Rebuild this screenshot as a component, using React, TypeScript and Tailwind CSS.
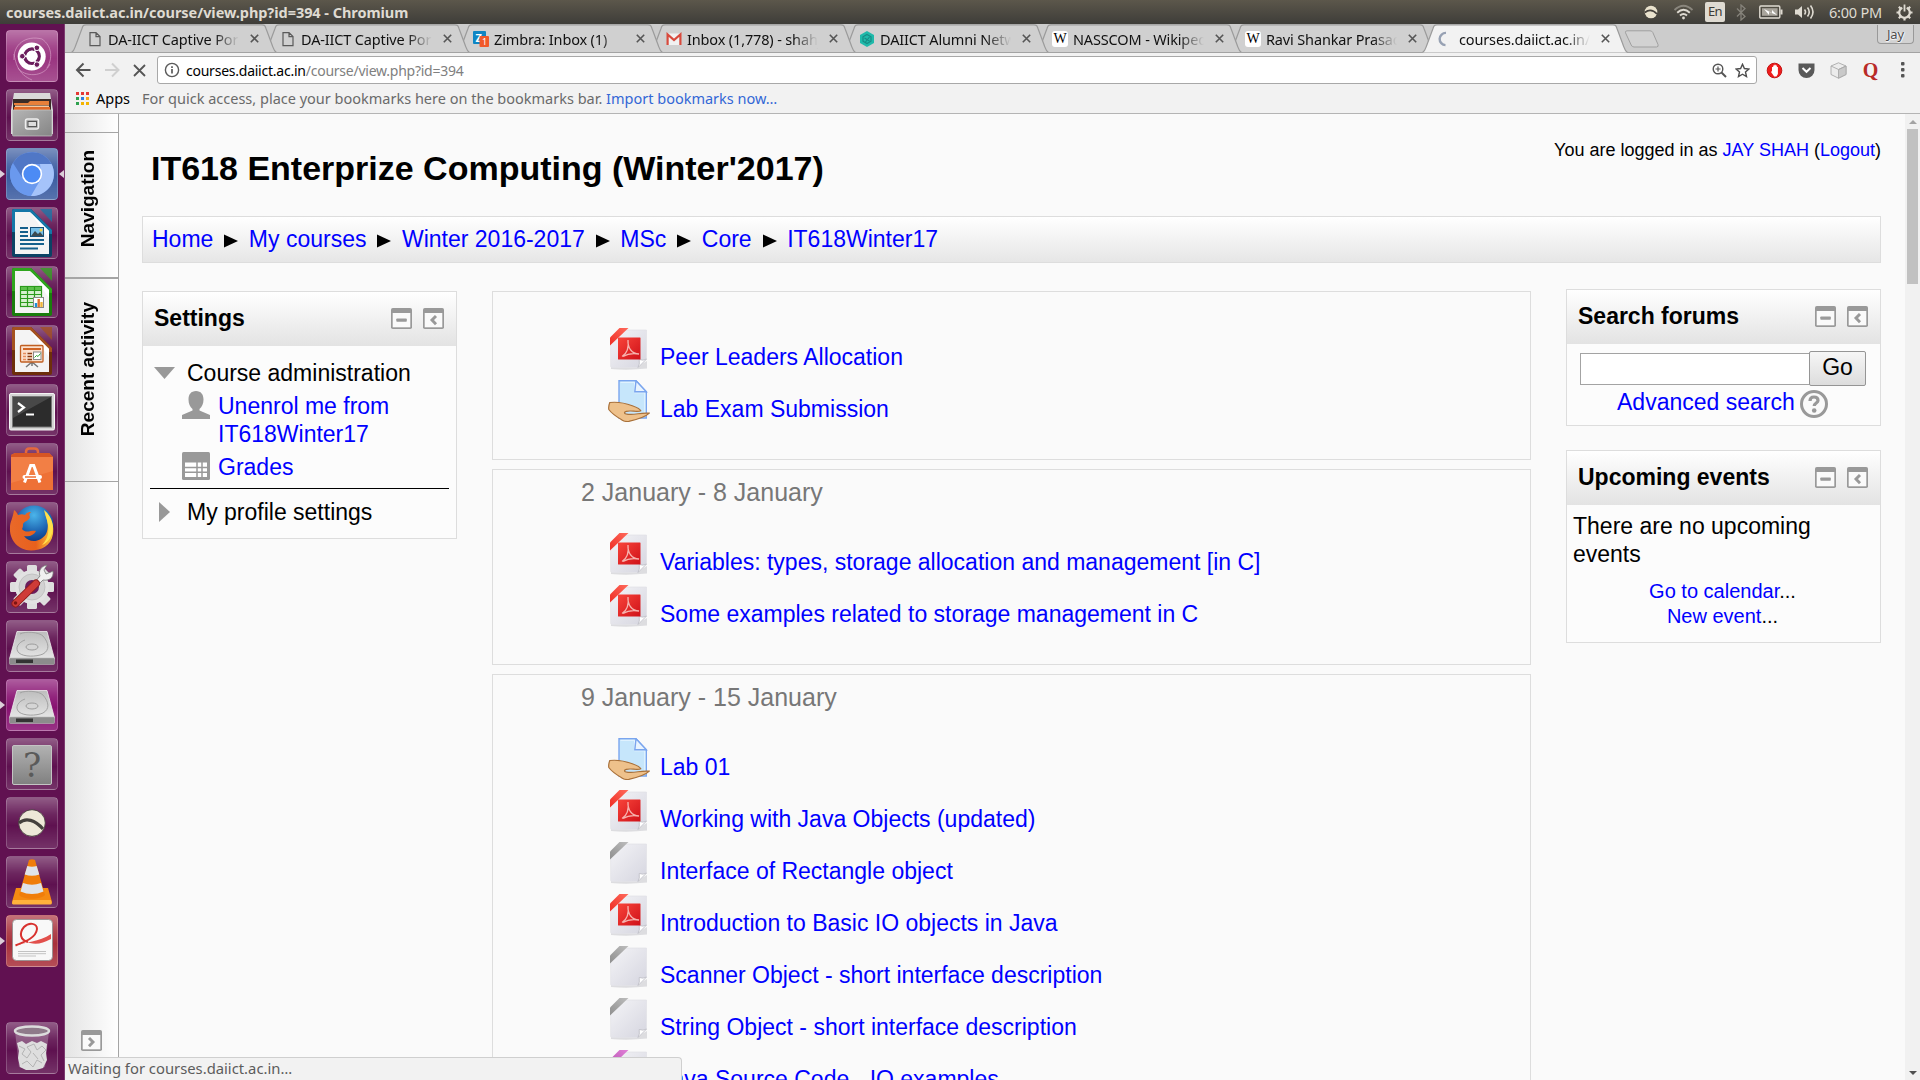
import React from "react";

type Kind = "pdf" | "hand" | "text" | "java";

const UI = "font-['Noto_Sans',sans-serif]";

/* ---------- Launcher icons ---------- */

const DashIcon = () => (
  <svg viewBox="0 0 52 52" className="size-full">
    <g fill="none" stroke="#e3b5d6" strokeOpacity=".55" strokeWidth="1">
      <path d="M8 30C7 14 20 5 36 9" />
      <path d="M12 38C18 47 38 48 44 34" />
      <path d="M36 9C46 16 47 28 41 38" />
      <path d="M8 24C10 34 12 44 26 50" />
    </g>
    <circle cx="25.7" cy="26.6" r="14" fill="#fff" />
    <circle cx="26" cy="26.2" r="7.3" fill="none" stroke="#6b1d5c" strokeWidth="3.2" />
    <g stroke="#fff" strokeWidth="1.4">
      <path d="M26 26.2L15 26.2M26 26.2L31.5 16.7M26 26.2L31.5 35.7" />
    </g>
    <circle cx="26" cy="26.2" r="5.4" fill="#fff" />
    <g fill="#6b1d5c" stroke="#fff" strokeWidth="1">
      <circle cx="16.3" cy="26.2" r="2.8" />
      <circle cx="30.9" cy="17.8" r="2.8" />
      <circle cx="30.9" cy="34.6" r="2.8" />
    </g>
  </svg>
);

const FilesIcon = () => (
  <svg viewBox="0 0 52 52" className="size-full">
    <defs>
      <linearGradient id="fc" x1="0" y1="0" x2="1" y2="1">
        <stop offset="0" stopColor="#b5b5b5" />
        <stop offset="1" stopColor="#858585" />
      </linearGradient>
    </defs>
    <path d="M8 4h36l3 17v24H5V21z" fill="#d9d9d9" />
    <rect x="7" y="10" width="38" height="13" fill="#3a2c28" />
    <path d="M8 14h14l2-2h19v4H8z" fill="#e8803a" />
    <path d="M9 16.5h34v3H9z" fill="#f6c9a0" />
    <path d="M8 18h36v5H8z" fill="#e06a28" />
    <rect x="6.5" y="21" width="39.5" height="26" rx="1" fill="url(#fc)" stroke="#c9c9c9" strokeWidth=".7" />
    <rect x="19.5" y="30" width="13" height="10" rx="2" fill="#aaa" stroke="#eee" strokeWidth="1.5" />
    <rect x="22" y="32.5" width="8.5" height="5" fill="#ddd" stroke="#555" />
  </svg>
);

const ChromiumIcon = () => (
  <svg viewBox="0 0 52 52" className="size-full">
    <circle cx="26" cy="26" r="22" fill="#6f9bee" />
    <path d="M7 15A22 22 0 0 0 25 48L34 31 26 26z" fill="#6a99ee" />
    <path d="M45.5 16A22 22 0 0 1 25 48L35.5 30 34 16z" fill="#a5c3fa" />
    <path d="M7 15A22 22 0 0 1 45.5 16H26A10 10 0 0 0 16.5 30z" fill="#5077c6" />
    <circle cx="26" cy="26" r="10.2" fill="#fff" />
    <circle cx="26" cy="26" r="8.6" fill="#4c8bf5" />
  </svg>
);

const OfficeBase = ({ color, dark, children }: { color: string; dark: string; children: React.ReactNode }) => (
  <svg viewBox="0 0 52 52" className="size-full">
    <path d="M8 2h17l21 21v25a2 2 0 0 1-2 2H8a2 2 0 0 1-2-2V4a2 2 0 0 1 2-2z" fill={dark} />
    <path d="M6 25V4a2 2 0 0 1 2-2h17l21 21v4z" fill={color} />
    <path d="M34 2h12v13z" fill={color} opacity=".75" />
    <path d="M9 5h15l19 19v23H9z" fill="#f4f4f4" />
    <path d="M24 5l19 19v8z" fill="#fff" />
    {children}
  </svg>
);

const WriterIcon = () => (
  <OfficeBase color="#1577a8" dark="#0b4264">
    <path d="M14 21h8M14 25h8M14 29h8M14 33h24M14 37h24M14 41.5h18" stroke="#15608c" strokeWidth="1.8" />
    <rect x="24.5" y="20.5" width="13" height="9" fill="#78c0e8" stroke="#15517a" />
    <path d="M25 29l4-5 3 3 2-2 3.5 4z" fill="#3c4a50" />
    <circle cx="35" cy="23" r="1.5" fill="#f5cf43" />
  </OfficeBase>
);

const CalcIcon = () => (
  <OfficeBase color="#2fa51d" dark="#1a7d0d">
    <rect x="14.5" y="20.5" width="21" height="20" fill="#d7f0cf" stroke="#2c9b1c" strokeWidth="1.2" />
    <path d="M15 22.5h20" stroke="#5ec14c" strokeWidth="3" />
    <path d="M14.5 24.5h21M14.5 28.5h21M14.5 32.5h21M14.5 36.5h21M21.5 20v20M28.5 20v20" stroke="#2c9b1c" strokeWidth="1.2" />
    <rect x="27.5" y="31.5" width="10" height="10" fill="#fff" stroke="#888" />
    <path d="M30 41v-4" stroke="#1e90d6" strokeWidth="2.4" />
    <path d="M32.7 41v-8" stroke="#e2702a" strokeWidth="2.4" />
    <path d="M35.5 41v-5" stroke="#f0b53a" strokeWidth="2.4" />
  </OfficeBase>
);

const ImpressIcon = () => (
  <OfficeBase color="#a4511f" dark="#6d2f0b">
    <path d="M20 42l6-5 6 5M26 37v4" stroke="#777" strokeWidth="1.5" fill="none" />
    <rect x="14.5" y="20.5" width="22.5" height="16.5" rx="1" fill="#fbe0cd" stroke="#c05f22" strokeWidth="1.3" />
    <path d="M17 24h18" stroke="#d06424" strokeWidth="2" />
    <path d="M17 28.5h3M17 31.5h3M17 34.5h3" stroke="#e58d5d" strokeWidth="1.6" />
    <path d="M21.5 28.5h4.5M21.5 31.5h4.5M21.5 34.5h4.5" stroke="#8a3c12" strokeWidth="1.6" />
    <rect x="27.5" y="27" width="7.5" height="7.5" fill="#fff" stroke="#888" />
    <path d="M28.5 32.5l2-2 1.5 1 2.5-3" stroke="#2da52d" fill="none" />
  </OfficeBase>
);

const TerminalIcon = () => (
  <svg viewBox="0 0 52 52" className="size-full">
    <rect x="3.5" y="9.5" width="45" height="36.5" rx="1.5" fill="#d4d4d4" stroke="#f4f4f4" />
    <rect x="6.5" y="12.5" width="39" height="30.500" fill="#2c2c2c" stroke="#777" />
    <path d="M7 13h38L7 34z" fill="#505050" opacity=".8" />
    <path d="M12 19l6 4.500-6 4.500" stroke="#fff" strokeWidth="2.2" fill="none" />
    <path d="M20 30.5h8" stroke="#fff" strokeWidth="2" />
  </svg>
);

const SoftwareIcon = () => (
  <svg viewBox="0 0 52 52" className="size-full">
    <path d="M20 17V9q0-3.500 3.500-3.500h5Q32 5.500 32 9v8" fill="none" stroke="#e5683c" strokeWidth="2.5" />
    <path d="M5 12l4-2h34l4 4v33H5z" fill="#ee7136" />
    <path d="M5 12l4-2h34l4 4H5z" fill="#d65523" />
    <path d="M5 14h42v14L5 40z" fill="#f58a52" opacity=".55" />
    <path d="M18.5 39.5l6.200-17h3l6.200 17" stroke="#fff" strokeWidth="3" fill="none" />
    <rect x="16.5" y="32" width="19.5" height="4" rx="2" fill="#fff" />
    <path d="M19 34h11" stroke="#ee7136" strokeWidth="1.3" />
  </svg>
);

const FirefoxIcon = () => (
  <svg viewBox="0 0 52 52" className="size-full">
    <defs>
      <radialGradient id="fxb" cx=".5" cy=".25" r=".75">
        <stop offset="0" stopColor="#4bb5ea" />
        <stop offset=".6" stopColor="#1a5fae" />
        <stop offset="1" stopColor="#0b2f75" />
      </radialGradient>
      <linearGradient id="fxo" x1="0" y1="0" x2="1" y2="0">
        <stop offset="0" stopColor="#e9692a" />
        <stop offset=".6" stopColor="#e8601c" />
        <stop offset="1" stopColor="#fbc83a" />
      </linearGradient>
    </defs>
    <circle cx="28" cy="23" r="19.5" fill="url(#fxb)" />
    <path d="M8 8c2 1 3 3 4 5 3-1 5-1 7 0 2-3 4-3 6-3-2 2-2 3-1 5-1 4-6 4-7 7 0 2 0 3-1 5 4 5 9 1 14 2-2 4-6 6-12 5 5 7 16 7 22-2 3-6 2-14-1-20 8 5 9 14 8 20-2 12-12 16.500-22 16.500C12 48 3 38 4 25c0-5 3-9 4-17z" fill="url(#fxo)" />
    <path d="M38 8c9 7 11 18 7 26-2 5-6 8-9 9 6-6 7-13 6-20-1-6-3-10-4-15z" fill="#ffe04a" />
  </svg>
);

const SettingsIcon = () => (
  <svg viewBox="0 0 52 52" className="size-full">
    <g transform="translate(26 26)">
      {[0, 45, 90, 135].map((a) => (
        <rect key={a} x="-5" y="-22" width="10" height="44" rx="1.5" fill="#dedede" transform={`rotate(${a})`} />
      ))}
      <circle r="17" fill="#e2e2e2" />
      <circle r="13" fill="#d2d2d2" stroke="#bdbdbd" strokeWidth=".8" />
      <circle r="7" fill="#6b1d5c" />
    </g>
    <path d="M28 22l6-7c-2-5 1-10 7-11l-3 5 2 4 5-2 2-1c1 7-4 10-10 9l-7 7z" fill="#f0f0f0" stroke="#777" strokeWidth=".8" />
    <path d="M9.5 42.5L30 22.5" stroke="#8e1d1b" strokeWidth="8" strokeLinecap="round" />
    <path d="M9.5 42.5L30 22.5" stroke="#cf3b37" strokeWidth="6" strokeLinecap="round" />
    <circle cx="9.5" cy="42" r="1.8" fill="#7d1412" />
  </svg>
);

const DriveIcon = () => (
  <svg viewBox="0 0 52 52" className="size-full">
    <defs>
      <linearGradient id="dr" x1="0" y1="0" x2="0" y2="1">
        <stop offset="0" stopColor="#bdbdbd" />
        <stop offset="1" stopColor="#e6e6e6" />
      </linearGradient>
    </defs>
    <path d="M11 11.5h30L48.500 39H3.500z" fill="url(#dr)" stroke="#efefef" strokeWidth=".8" />
    <path d="M3.500 38h45v5.500a1 1 0 0 1-1 1h-43a1 1 0 0 1-1-1z" fill="#8c8c8c" stroke="#bbb" strokeWidth=".6" />
    <rect x="10" y="39.5" width="17" height="3.500" fill="#333" />
    <path d="M14 14c5-3 19-2 23 2 6 7 7 14 0 18-7 3-19 3-24-1-5-5 0-11 6-13" fill="none" stroke="#a2a2a2" strokeWidth="1" />
    <ellipse cx="26" cy="27" rx="6" ry="3" fill="#d5d5d5" stroke="#9c9c9c" />
  </svg>
);

const UnknownIcon = () => (
  <svg viewBox="0 0 52 52" className="size-full">
    <defs>
      <linearGradient id="un" x1="0" y1="0" x2="0" y2="1">
        <stop offset="0" stopColor="#b2b2b2" />
        <stop offset="1" stopColor="#808080" />
      </linearGradient>
    </defs>
    <rect x="6.5" y="7.5" width="39" height="39" rx="1.5" fill="url(#un)" stroke="#c4c4c4" />
    <text x="26" y="39" textAnchor="middle" fontFamily="DejaVu Serif" fontSize="34" fill="#5a5a5a">?</text>
  </svg>
);

const BallIcon = () => (
  <svg viewBox="0 0 52 52" className="size-full">
    <circle cx="26" cy="26" r="13.3" fill="#eee8d8" stroke="#3a3532" strokeWidth=".8" />
    <path d="M13 26c7-6 16-3 24 6" fill="none" stroke="#45413d" strokeWidth="3.2" />
  </svg>
);

const VlcIcon = () => (
  <svg viewBox="0 0 52 52" className="size-full">
    <path d="M10 32h32l4 14a2 2 0 0 1-2 2H8a2 2 0 0 1-2-2z" fill="#f58a12" />
    <path d="M7 44h38l.8 3a1.500 1.500 0 0 1-1.500 1.500H8A1.500 1.500 0 0 1 6 47z" fill="#ffb23c" />
    <path d="M23 4q3-1.500 6 0l10 35c-5 5-21 5-26 0z" fill="#f07d0a" />
    <path d="M21.300 10q4.700 1.500 9.400 0l2.600 8.500q-7.300 2.500-14.600 0zM17 27q9 3.500 18 0l2.500 8.500q-11.500 5-23 0z" fill="#dfe3ea" />
  </svg>
);

const EvinceIcon = () => (
  <svg viewBox="0 0 52 52" className="size-full">
    <rect x="6.5" y="4.500" width="40" height="41" rx="4" fill="#f8f8f8" stroke="#8e8e8e" strokeWidth=".8" />
    <path d="M9.500 30.500C15 28 30 24 31 14c0-6-8-7-13-2-5 6-4 13 4 15" fill="none" stroke="#d8322f" strokeWidth="2" />
    <path d="M9 31c10-4 24-4 36-12v5c-8 4-14 6-21 4-5-1-10 1-15 3z" fill="#e2504c" />
    <path d="M12 36.500h28M12 38.700h28M12 41h18" stroke="#c2c2c2" />
  </svg>
);

const TrashIcon = () => (
  <svg viewBox="0 0 52 52" className="size-full">
    <path d="M9 9h34l-4 36q-13 5-26 0z" fill="#cfc0cc" opacity=".35" />
    <ellipse cx="26" cy="9" rx="17" ry="4.500" fill="#8f7a8a" stroke="#dcdcdc" strokeWidth="2.500" />
    <path d="M11 21l5-2 4 3 6-3 5 2 4-2 6 3-1 9 1 7-4 8-7 2H20l-6-3-2-9 1-7z" fill="#dedede" />
    <path d="M13 24l6 3-3 5 5 4 4-6-4-5 7-3 3 6 5-4 4 4-5 5 3 6M16 42l5-3 6 6 4-7 5 3M27 31l5 6" fill="none" stroke="#b4b4b4" strokeWidth="1" />
  </svg>
);

const launcher: { icon: React.ReactNode; tint?: string; running?: boolean; active?: boolean }[] = [
  { icon: <DashIcon />, tint: "bg-[#99337f]" },
  { icon: <FilesIcon /> },
  { icon: <ChromiumIcon />, tint: "bg-[#3a5ba0]", running: true, active: true },
  { icon: <WriterIcon /> },
  { icon: <CalcIcon /> },
  { icon: <ImpressIcon /> },
  { icon: <TerminalIcon /> },
  { icon: <SoftwareIcon /> },
  { icon: <FirefoxIcon /> },
  { icon: <SettingsIcon /> },
  { icon: <DriveIcon /> },
  { icon: <DriveIcon />, tint: "bg-[#870f70]", running: true },
  { icon: <UnknownIcon /> },
  { icon: <BallIcon /> },
  { icon: <VlcIcon /> },
  { icon: <EvinceIcon />, tint: "bg-[#a82f3a]", running: true },
];

const Tile = ({ icon, tint = "bg-[#5d0f4e]", running, active }: (typeof launcher)[number]) => (
  <div className="relative flex h-[52px] w-[65px] shrink-0 pl-[6px]">
    <div className={`size-[52px] overflow-hidden rounded-[4px] ${tint}`}>
      <div className="size-full rounded-[4px] border border-white/20 bg-[linear-gradient(to_bottom,rgba(255,255,255,.32),rgba(255,255,255,.1)_32%,rgba(255,255,255,.01)_55%,rgba(255,255,255,.15))]">
        <div className="-m-px size-[52px]">{icon}</div>
      </div>
    </div>
    {running && <div className="absolute top-[22px] left-0 border-y-4 border-l-[5px] border-y-transparent border-l-[#dccfd9]" />}
    {active && <div className="absolute top-[22px] right-px border-y-4 border-r-[5px] border-y-transparent border-r-[#dccfd9]" />}
  </div>
);

/* ---------- Browser chrome ---------- */

const PageFav = () => (
  <svg width="16" height="16" viewBox="0 0 16 16" fill="none" stroke="#5a5a5a" strokeWidth="1.2">
    <path d="M3 1.600h6l4 4v9H3zM9 1.600v4h4" />
  </svg>
);
const ZimbraFav = () => (
  <svg width="16" height="16" viewBox="0 0 16 16">
    <rect width="13" height="13" rx="1" fill="#0f86c4" />
    <text x="2.5" y="10.5" fontFamily="Noto Sans" fontWeight="700" fontSize="11" fill="#fff">Z</text>
    <rect x="6.5" y="5" width="9.5" height="11" rx="1" fill="#f0592a" />
    <text x="9" y="14" fontFamily="Noto Sans" fontSize="9" fill="#fff">1</text>
  </svg>
);
const GmailFav = () => (
  <svg width="16" height="16" viewBox="0 0 16 16">
    <rect x="1" y="2.5" width="14" height="11.5" fill="#f1f1f1" />
    <path d="M1.600 14V3.500L8 9l6.400-5.500V14" fill="none" stroke="#d84a3d" strokeWidth="2.2" />
  </svg>
);
const AlumniFav = () => (
  <svg width="16" height="16" viewBox="0 0 16 16">
    <path d="M8 0l7 4v8l-7 4-7-4V4z" fill="#1fb9aa" />
    <path d="M8 3.500l4 2.300v4.400l-4 2.300-4-2.300V5.800zM5.500 7l5 3M10.500 6l-4 5" fill="none" stroke="#178b84" strokeWidth="1.2" />
  </svg>
);
const WikiFav = () => (
  <span className="flex size-4 items-center justify-center rounded-[3px] bg-white font-['Liberation_Serif',serif] text-[14px] leading-none text-black">W</span>
);
const Spinner = () => (
  <svg width="16" height="16" viewBox="0 0 16 16">
    <path d="M8 1.900A6.100 6.100 0 0 0 7.500 14.100" fill="none" stroke="#97a1b3" strokeWidth="2.4" />
  </svg>
);

const tabs: { title: string; icon: React.ReactNode }[] = [
  { title: "DA-IICT Captive Por", icon: <PageFav /> },
  { title: "DA-IICT Captive Por", icon: <PageFav /> },
  { title: "Zimbra: Inbox (1)", icon: <ZimbraFav /> },
  { title: "Inbox (1,778) - shahj", icon: <GmailFav /> },
  { title: "DAIICT Alumni Netw", icon: <AlumniFav /> },
  { title: "NASSCOM - Wikiped", icon: <WikiFav /> },
  { title: "Ravi Shankar Prasad", icon: <WikiFav /> },
  { title: "courses.daiict.ac.in/", icon: <Spinner /> },
];
const layers = ["z-[7]", "z-[6]", "z-[5]", "z-[4]", "z-[3]", "z-[2]", "z-[1]", "z-[8]"];

const Tab = ({ title, icon, index }: { title: string; icon: React.ReactNode; index: number }) => {
  const active = index === 7;
  return (
    <div className={`relative flex h-[29px] w-[193px] shrink-0 items-center ${layers[index]}`}>
      <svg className="absolute top-0 left-0" width="207" height="29" viewBox="0 0 207 29">
        <path
          d="M0.5 28.5C3 27 3.500 25 4.500 22L11 4.500C12 1.500 12.500 .8 15 .8H191C193.500 .8 194 1.500 195 4.500L201.500 22C202.500 25 203 27 205.500 28.500"
          fill={active ? "#f2f2f2" : "#d0d0d0"}
          stroke="#9b9b9b"
          strokeWidth="1.2"
        />
        {!active && <path d="M0 28.500H207" stroke="#a3a3a3" />}
      </svg>
      <div className="relative ml-[16px] size-4">{icon}</div>
      <div className="relative ml-[5px] w-[132px] text-[14.5px] leading-[22px] tracking-[-0.15px] whitespace-nowrap text-[#111] [mask-image:linear-gradient(to_right,#000_106px,transparent_131px)]">{title}</div>
      <svg className="relative ml-[10px]" width="9" height="9" viewBox="0 0 9 9" stroke="#555" strokeWidth="1.6">
        <path d="M.8 .8l7.400 7.400M8.200 .8L.8 8.200" />
      </svg>
    </div>
  );
};

const appColors = ["bg-[#e53935]", "bg-[#e53935]", "bg-[#e53935]", "bg-[#2fa14f]", "bg-[#2f7de1]", "bg-[#f4a91f]", "bg-[#2fa14f]", "bg-[#f4b400]", "bg-[#f4b400]"];

const Chrome = () => (
  <div className={`h-[90px] shrink-0 border-b border-[#b4b4b4] bg-[#f2f2f2] ${UI}`}>
    <div className="flex h-[29px] border-b border-[#a3a3a3] bg-[#cccccc] pl-[6px]">
      {tabs.map((t, i) => (
        <Tab key={i} {...t} index={i} />
      ))}
      <svg className="mt-[6px] ml-[9px] shrink-0" width="36" height="19" viewBox="0 0 36 19">
        <path d="M3 .8H26Q28 .8 28.800 2.500L34 14.500Q34.800 17 32.500 17H10Q8 17 7.200 15L1.500 2.800Q1 .8 3 .8z" fill="#d2d2d2" stroke="#a0a0a0" />
      </svg>
      <div className="mt-[1px] mr-[6px] ml-auto flex h-[19px] w-[37px] items-end justify-center rounded-b-[4px] border border-t-0 border-[#999] bg-[#d2d2d2] text-[13px] leading-[17px] tracking-[-0.1px] text-[#4d4d4d] [text-shadow:0_1px_1px_#fff,1px_0_1px_#fff]">
        Jay
      </div>
    </div>
    <div className="flex h-[34px] items-center pr-[15px]">
      <svg className="ml-[10px]" width="17" height="16" viewBox="0 0 17 16" fill="none" stroke="#555" strokeWidth="2">
        <path d="M15.500 8H2.500M8.500 1.500L2 8l6.500 6.500" />
      </svg>
      <svg className="ml-[12px]" width="17" height="16" viewBox="0 0 17 16" fill="none" stroke="#d0d0d0" strokeWidth="2">
        <path d="M1 8h13M8 1.500L14.500 8 8 14.500" />
      </svg>
      <svg className="ml-[12px]" width="13" height="13" viewBox="0 0 13 13" fill="none" stroke="#555" strokeWidth="1.8">
        <path d="M1 1l11 11M12 1L1 12" />
      </svg>
      <div className="ml-[11px] flex h-[28px] flex-1 items-center rounded-[3px] border border-[#a8a8a8] bg-white px-[6px]">
        <svg width="16" height="16" viewBox="0 0 16 16" fill="none" stroke="#5a5a5a" strokeWidth="1.4">
          <circle cx="8" cy="8" r="6.600" />
          <path d="M8 7v4.500M8 4.300v1.600" strokeWidth="1.7" />
        </svg>
        <div className="ml-[6px] text-[14px] tracking-[-0.24px] text-[#808080]">
          <span className="text-black">courses.daiict.ac.in</span>/course/view.php?id=394
        </div>
        <svg className="ml-auto" width="15" height="15" viewBox="0 0 15 15" fill="none" stroke="#555" strokeWidth="1.4">
          <circle cx="6" cy="6" r="4.800" />
          <path d="M9.500 9.500l4.500 4.500" strokeWidth="1.9" />
          <path d="M3.500 6h5M6 3.500v5" strokeWidth="1.2" />
        </svg>
        <svg className="ml-[8px]" width="15" height="15" viewBox="0 0 15 15" fill="none" stroke="#4d4d4d" strokeWidth="1.4">
          <path d="M7.500 1.300l1.900 4.200 4.500.5-3.400 3 1 4.500-4-2.300-4 2.300 1-4.500-3.400-3 4.500-.5z" />
        </svg>
      </div>
      <svg className="ml-[9px]" width="17" height="17" viewBox="0 0 17 17">
        <circle cx="8.500" cy="8.500" r="7.300" fill="#ef1c1c" stroke="#c31313" />
        <path d="M6 9V5h1.200V3.500h1.200V2.700h1.300v.8h1.200V5h1V12l-1.500 2.500H8.200L5 10z" fill="#fff" />
      </svg>
      <svg className="ml-[15px]" width="17" height="17" viewBox="0 0 17 17">
        <path d="M.5 1.500h16v6.500a8 8 0 0 1-16 0z" fill="#5a5a5a" />
        <path d="M4.500 6l4 3.800 4-3.800" fill="none" stroke="#fff" strokeWidth="2" />
      </svg>
      <svg className="ml-[15px]" width="17" height="17" viewBox="0 0 17 17" stroke="#a9a9a9" strokeWidth=".9">
        <path d="M8.500.8L16 4v8.500l-7.500 3.700L1 12.500V4z" fill="#ececec" />
        <path d="M8.500 7.500L16 4v8.500l-7.500 3.700z" fill="#c9c9c9" />
        <path d="M1 4l7.500 3.500L16 4" fill="none" />
      </svg>
      <div className="ml-[15px] w-[17px] text-center font-['Liberation_Serif',serif] text-[20px] leading-[22px] font-bold text-[#b92b27]">Q</div>
      <svg className="ml-[22px]" width="4" height="16" viewBox="0 0 4 16" fill="#555">
        <rect y="0" width="3.500" height="3.500" rx="1" />
        <rect y="6" width="3.500" height="3.500" rx="1" />
        <rect y="12" width="3.500" height="3.500" rx="1" />
      </svg>
    </div>
    <div className="flex h-[22px] items-center pl-[11px] text-[14.500px] leading-[22px] text-[#6a6a6a]">
      <div className="grid grid-cols-3 gap-[2px]">
        {appColors.map((c, i) => (
          <div key={i} className={`size-[3px] ${c}`} />
        ))}
      </div>
      <span className="ml-[7px] text-black">Apps</span>
      <span className="ml-[12px]">
        For quick access, place your bookmarks here on the bookmarks bar. <span className="text-[#3367d6]">Import bookmarks now…</span>
      </span>
    </div>
  </div>
);

/* ---------- System panel ---------- */

const Panel = () => (
  <div className={`flex h-6 shrink-0 items-center bg-linear-to-b from-[#5c574b] to-[#3e3d39] pr-[7px] pl-[6px] text-[#dfdbd2] ${UI}`}>
    <span className="text-[14.500px] leading-[22px] font-bold tracking-[-0.05px]">courses.daiict.ac.in/course/view.php?id=394 - Chromium</span>
    <svg className="ml-auto" width="14" height="14" viewBox="0 0 14 14">
      <circle cx="7" cy="7" r="6.300" fill="#e9e2cd" />
      <path d="M.8 7.500Q7 2.500 13 9" fill="none" stroke="#45413c" strokeWidth="1.8" />
    </svg>
    <svg className="ml-[15px]" width="21" height="16" viewBox="0 0 21 16" fill="none" strokeWidth="1.9">
      <path d="M1.500 6Q10.500-2.500 19.500 6" stroke="#8a867d" />
      <path d="M4.200 8.800Q10.500 2.800 16.800 8.800" stroke="#dfdbd2" />
      <path d="M7 11.500Q10.500 8.300 14 11.500" stroke="#dfdbd2" />
      <circle cx="10.500" cy="14" r="1.400" fill="#dfdbd2" />
    </svg>
    <span className="ml-[11px] flex h-[20px] w-[20px] items-center justify-center rounded-[2px] bg-[#dfdbd2] text-[13px] tracking-[-0.6px] text-[#3c3b37]">En</span>
    <svg className="ml-[11px]" width="10" height="17" viewBox="0 0 10 17" fill="none" stroke="#86837b" strokeWidth="1.3">
      <path d="M1 4.500l8 8-4 3.500V1l4 3.500-8 8" />
    </svg>
    <svg className="ml-[13px]" width="24" height="14" viewBox="0 0 24 14" fill="none" stroke="#dfdbd2" strokeWidth="1.4">
      <rect x=".8" y="1" width="20" height="12" rx="1" />
      <rect x="3" y="3.200" width="15.600" height="7.600" fill="#a9a59c" stroke="none" />
      <path d="M22.500 4.500v5" strokeWidth="2" />
      <path d="M5 4l8 4V5l5 5-8-3v3z" fill="#fff" stroke="none" />
    </svg>
    <svg className="ml-[11px]" width="21" height="16" viewBox="0 0 21 16" fill="none" stroke="#dfdbd2" strokeWidth="1.6">
      <path d="M1 5.500h3L8 2v12l-4-3.500H1z" fill="#dfdbd2" stroke="none" />
      <path d="M10.500 5.500q2 2.500 0 5M13.500 3.500q3.500 4.500 0 9M16.500 1.500q5 6.500 0 13" />
    </svg>
    <span className="ml-[14px] text-[14.500px] leading-[22px] tracking-[-0.2px]">6:00 PM</span>
    <svg className="ml-[14px]" width="17" height="17" viewBox="-8.500 -8.500 17 17" fill="none" stroke="#dfdbd2">
      <path d="M-2.200-4.800A5.300 5.300 0 1 0 2.200-4.800" strokeWidth="2.2" />
      <path d="M0-8v7" strokeWidth="1.8" />
      <path d="M-8 0h3M8 0h-3M0 8V5M-5.700 5.700l2-2M5.700 5.700l-2-2M-5.700-5.700l2 2M5.700-5.700l-2 2" strokeWidth="2.2" />
    </svg>
  </div>
);

/* ---------- Course page ---------- */

const MinusBox = () => (
  <svg width="21" height="21" viewBox="0 0 21 21">
    <rect width="21" height="21" rx="1.8" fill="#999" />
    <rect x="1.700" y="5" width="17.600" height="14.300" fill="#fafafa" />
    <rect x="5.300" y="10.500" width="10.500" height="3.200" rx=".8" fill="#999" />
  </svg>
);
const DockBox = ({ flip = false }: { flip?: boolean }) => (
  <svg width="21" height="21" viewBox="0 0 21 21" className={flip ? "-scale-x-100" : ""}>
    <rect width="21" height="21" rx="1.8" fill="#999" />
    <rect x="1.700" y="5" width="17.600" height="14.300" fill="#fafafa" />
    <path d="M13 8l-4 4.100 4 4.100" fill="none" stroke="#999" strokeWidth="2.900" />
  </svg>
);

const FileIcon = ({ kind }: { kind: Kind }) => {
  if (kind === "hand")
    return (
      <svg className="shrink-0" width="42" height="42" viewBox="0 0 42 42">
        <path d="M11 .8h17l10.300 11V38H11z" fill="#c6e6fb" stroke="#7aa5ee" strokeWidth="1.4" />
        <path d="M12.500 2.300h14v10.500h10.300V35" fill="none" stroke="#e6f5ff" strokeWidth="1" />
        <path d="M28 .8l10.300 11H26.800z" fill="#e9f4fe" stroke="#7aa5ee" strokeWidth="1.4" />
        <path
          d="M1.800 22.500c7-.8 16 .8 22.500 3.200 3.500 1.300 8 3.500 8.500 5-1.500 1.300-6 .5-10 .3-3.500-.1-6.500.5-6.300 1.900.2 1.400 3 1.500 6.500 1.500 6 0 11-2 18.300-1.200-3 3-13 6.500-20.500 8.200-2.500.4-5-.3-7-1.500C9 37 4 34 .8 29.500c-.4-2.500.2-5 1-7z"
          fill="#eec18b"
          stroke="#a9713a"
          strokeWidth="1.2"
        />
      </svg>
    );
  const band = kind === "pdf" ? "#ee2d24" : kind === "java" ? "#b455b0" : "#8f8f8f";
  const bandLight = kind === "pdf" ? "#ff6a5c" : kind === "java" ? "#e27fd8" : "#bdbdbd";
  return (
    <svg className="shrink-0" width="42" height="42" viewBox="0 0 42 42">
      <defs>
        <linearGradient id={`pg-${kind}`} x1="0" y1="0" x2="1" y2="1">
          <stop offset="0" stopColor="#f4f4f7" />
          <stop offset=".85" stopColor="#dadae3" />
        </linearGradient>
        <linearGradient id={`bd-${kind}`} x1="0" y1="1" x2="1" y2="0">
          <stop offset="0" stopColor={band} />
          <stop offset="1" stopColor={bandLight} />
        </linearGradient>
        <linearGradient id="acro" x1="0" y1="0" x2="1" y2="1">
          <stop offset="0" stopColor="#f8443a" />
          <stop offset="1" stopColor="#cf1119" />
        </linearGradient>
      </defs>
      <path d="M3 38h27l9-5v7.500q-18 2-36 .5z" fill="#c9c9ce" opacity=".6" />
      <path d="M13 2h25.500v29L30 39.500H4q-1.300 0-1.300-1.300V12z" fill={`url(#pg-${kind})`} stroke="#e2e2e7" strokeWidth=".8" />
      <path d="M30 39.500q2-3 1.200-8 4 1.500 7.300-.5z" fill="#fff" stroke="#bcbcc4" strokeWidth=".8" />
      <path d="M11.500 0H20.500L2 17.500V9.500z" fill={`url(#bd-${kind})`} />
      {kind === "pdf" && (
        <>
          <rect x="10" y="9.500" width="22.500" height="22" rx=".5" fill="url(#acro)" />
          <path d="M14 28.500c5-3 7-9 6-16.500-.5 8 4 14 11 14-6-1-12 0-16 2.500" fill="none" stroke="#f6b3ae" strokeWidth="1.3" />
        </>
      )}
    </svg>
  );
};

const sections: { title?: string; items: { kind: Kind; label: string }[] }[] = [
  {
    items: [
      { kind: "pdf", label: "Peer Leaders Allocation" },
      { kind: "hand", label: "Lab Exam Submission" },
    ],
  },
  {
    title: "2 January - 8 January",
    items: [
      { kind: "pdf", label: "Variables: types, storage allocation and management [in C]" },
      { kind: "pdf", label: "Some examples related to storage management in C" },
    ],
  },
  {
    title: "9 January - 15 January",
    items: [
      { kind: "hand", label: "Lab 01" },
      { kind: "pdf", label: "Working with Java Objects (updated)" },
      { kind: "text", label: "Interface of Rectangle object" },
      { kind: "pdf", label: "Introduction to Basic IO objects in Java" },
      { kind: "text", label: "Scanner Object - short interface description" },
      { kind: "text", label: "String Object - short interface description" },
      { kind: "java", label: "Java Source Code - IO examples" },
    ],
  },
];

const Block = ({ title, children, className = "" }: { title: string; children: React.ReactNode; className?: string }) => (
  <div className={`border border-[#dddddd] bg-[#fcfcfc] ${className}`}>
    <div className="flex h-[54px] items-center bg-linear-to-b from-white to-[#e3e3e3] pr-[12px] pb-[2px] pl-[11px]">
      <span className="text-[23px] leading-[28px] font-bold">{title}</span>
      <div className="ml-auto flex gap-[11px]">
        <MinusBox />
        <DockBox />
      </div>
    </div>
    {children}
  </div>
);

const crumbs = ["Home", "My courses", "Winter 2016-2017", "MSc", "Core", "IT618Winter17"];

const CoursePage = () => (
  <div className="flex min-w-0 flex-1 flex-col pr-[24px] pl-[23px]">
    <div className="flex h-[102px] shrink-0 items-start justify-between">
      <h1 className="mt-[34px] pl-[9px] text-[34px] leading-[40px] font-bold">IT618 Enterprize Computing (Winter'2017)</h1>
      <div className="mt-[24px] text-[18px] leading-[24px]">
        You are logged in as <span className="text-[#0000ff]">JAY SHAH</span> (<span className="text-[#0000ff]">Logout</span>)
      </div>
    </div>
    <div className="flex h-[47px] shrink-0 items-center border border-[#dddddd] bg-linear-to-b from-white to-[#e6e6e6] pb-px pl-[9px] text-[23px] leading-[28px] text-[#0000ff]">
      {crumbs.map((c, i) => (
        <React.Fragment key={c}>
          {i > 0 && (
            <svg className="mt-[3px] mr-[10.500px] ml-[11px]" width="14" height="14" viewBox="0 0 14 14">
              <path d="M0 .5L14 7 0 13.500z" fill="#000" />
            </svg>
          )}
          <span>{c}</span>
        </React.Fragment>
      ))}
    </div>
    <div className="flex min-h-0 flex-1 items-start gap-[35px] overflow-hidden">
      <div className="w-[315px] shrink-0 pt-[28px] text-[23px] leading-[28px]">
        <Block title="Settings" className="h-[248px]">
          <div className="px-[7px] pt-[13px]">
            <div className="flex items-center">
              <svg className="ml-[4px]" width="21" height="12" viewBox="0 0 21 12">
                <path d="M0 0h21L10.500 12z" fill="#999" />
              </svg>
              <span className="ml-[12px]">Course administration</span>
            </div>
            <div className="mt-[5px] flex text-[#0000ff]">
              <svg className="-mt-px mr-[8px] ml-[32px] shrink-0" width="28" height="28" viewBox="0 0 28 28">
                <path d="M14 0c5 0 7.500 3.500 7.500 8.500 0 4-1.500 7.500-4 9.500v1.500L28 24v4H0v-4l10.500-4.500V18c-2.500-2-4-5.500-4-9.500C6.500 3.500 9 0 14 0z" fill="#999" />
              </svg>
              <div>
                Unenrol me from
                <br />
                IT618Winter17
              </div>
            </div>
            <div className="mt-[5px] flex text-[#0000ff]">
              <svg className="-mt-px mr-[8px] ml-[32px] shrink-0" width="28" height="28" viewBox="0 0 28 28">
                <rect width="28" height="28" rx="1.5" fill="#999" />
                <rect x="3" y="10.500" width="22" height="14.500" fill="#fff" />
                <path d="M3 15.500h22M3 20.300h22M15 10v15M20 10v15" stroke="#999" strokeWidth="1.5" />
              </svg>
              Grades
            </div>
            <div className="mt-[7px] h-px bg-black" />
            <div className="mt-[9px] flex items-center">
              <svg className="ml-[9px]" width="11" height="20" viewBox="0 0 11 20">
                <path d="M0 0v20l11-10z" fill="#999" />
              </svg>
              <span className="ml-[17px]">My profile settings</span>
            </div>
          </div>
        </Block>
      </div>
      <div className="flex w-[1039px] shrink-0 flex-col gap-[9px] pt-[28px]">
        {sections.map((s, i) => (
          <div key={i} className="border border-[#dddddd] pb-[27px]">
            {s.title ? (
              <div className="h-[63px] pt-[7px] pl-[88px] text-[25px] leading-[30px] text-[#777777]">{s.title}</div>
            ) : (
              <div className="h-[36px]" />
            )}
            {s.items.map((it) => (
              <div key={it.label} className="flex h-[52px] items-start pl-[115px]">
                <FileIcon kind={it.kind} />
                <span className="mt-[15px] ml-[10px] text-[23px] leading-[28px] whitespace-nowrap text-[#0000ff]">{it.label}</span>
              </div>
            ))}
          </div>
        ))}
      </div>
      <div className="flex w-[315px] shrink-0 flex-col gap-[24px] pt-[26px] text-[23px] leading-[28px]">
        <Block title="Search forums" className="h-[137px]">
          <div className="flex items-center pt-[7px] pl-[13px]">
            <div className="h-[32px] w-[230px] border border-[#a3a3a3] bg-white" />
            <div className="-ml-px flex h-[35px] w-[57px] items-center justify-center rounded-[2px] border border-[#959595] bg-linear-to-b from-[#f6f6f6] to-[#dddddd] pb-[3px]">Go</div>
          </div>
          <div className="flex pt-[2px] pl-[50px] text-[#0000ff]">
            Advanced search
            <svg className="mt-[2px] ml-[5px]" width="28" height="28" viewBox="0 0 28 28">
              <circle cx="14" cy="14" r="12.500" fill="#fafafa" stroke="#999" strokeWidth="3" />
              <path d="M10 11q0-4 4-4t4 3.500c0 2.500-3.800 2.500-3.800 5.500" fill="none" stroke="#999" strokeWidth="3.2" />
              <circle cx="14.200" cy="20.500" r="2.300" fill="#999" />
            </svg>
          </div>
        </Block>
        <Block title="Upcoming events" className="h-[193px]">
          <div className="w-[270px] pt-[7px] pl-[6px]">There are no upcoming events</div>
          <div className="mt-[11px] pr-[2px] text-center text-[20px] leading-[25px]">
            <span className="text-[#0000ff]">Go to calendar</span>...
            <br />
            <span className="text-[#0000ff]">New event</span>...
          </div>
        </Block>
      </div>
    </div>
  </div>
);

const SideDock = () => (
  <div className="flex w-[54px] shrink-0 flex-col border-r border-[#a5a5a5] bg-linear-to-r from-[#e4e4e4] to-white text-[19px] leading-[22px] font-bold">
    <div className="h-[18px]" />
    <div className="flex h-[146px] items-center justify-center border-y border-[#a5a5a5]">
      <span className="mr-[8px] mb-[12px] rotate-180 [writing-mode:vertical-rl]">Navigation</span>
    </div>
    <div className="flex h-[204px] items-center justify-center border-y border-[#a5a5a5]">
      <span className="mr-[8px] mb-[21px] rotate-180 whitespace-nowrap [writing-mode:vertical-rl]">Recent activity</span>
    </div>
    <div className="mt-auto mb-[29px] ml-[16px]">
      <DockBox flip />
    </div>
  </div>
);

export default function App() {
  return (
    <div className="flex h-[1080px] w-[1920px] flex-col overflow-hidden bg-[#fafafa] font-['Liberation_Sans',sans-serif] text-black">
      <Panel />
      <div className="flex min-h-0 flex-1">
        <div className="flex w-[65px] shrink-0 flex-col gap-[7px] bg-[#611151] pt-[6px] pb-[6px] shadow-[inset_-1px_0_0_#7d3a70]">
          {launcher.map((l, i) => (
            <Tile key={i} {...l} />
          ))}
          <div className="mt-auto">
            <Tile icon={<TrashIcon />} />
          </div>
        </div>
        <div className="relative flex min-w-0 flex-1 flex-col">
          <Chrome />
          <div className="flex min-h-0 flex-1">
            <SideDock />
            <CoursePage />
            <div className="flex w-[15px] shrink-0 flex-col items-center bg-[#f1f1f1] pt-[6px]">
              <div className="border-x-4 border-b-4 border-x-transparent border-b-[#a3a3a3]" />
              <div className="mt-[5px] h-[155px] w-[11px] bg-[#c1c1c1]" />
              <div className="mt-auto mb-[5px] border-x-4 border-t-4 border-x-transparent border-t-[#505050]" />
            </div>
          </div>
          <div className={`absolute bottom-0 left-0 h-[23px] w-[617px] rounded-tr-[4px] border-t border-r border-[#cfcfcf] bg-[#f2f2f2] pl-[3px] text-[14.800px] leading-[21px] text-[#5c5c5c] ${UI}`}>
            Waiting for courses.daiict.ac.in…
          </div>
        </div>
      </div>
    </div>
  );
}
